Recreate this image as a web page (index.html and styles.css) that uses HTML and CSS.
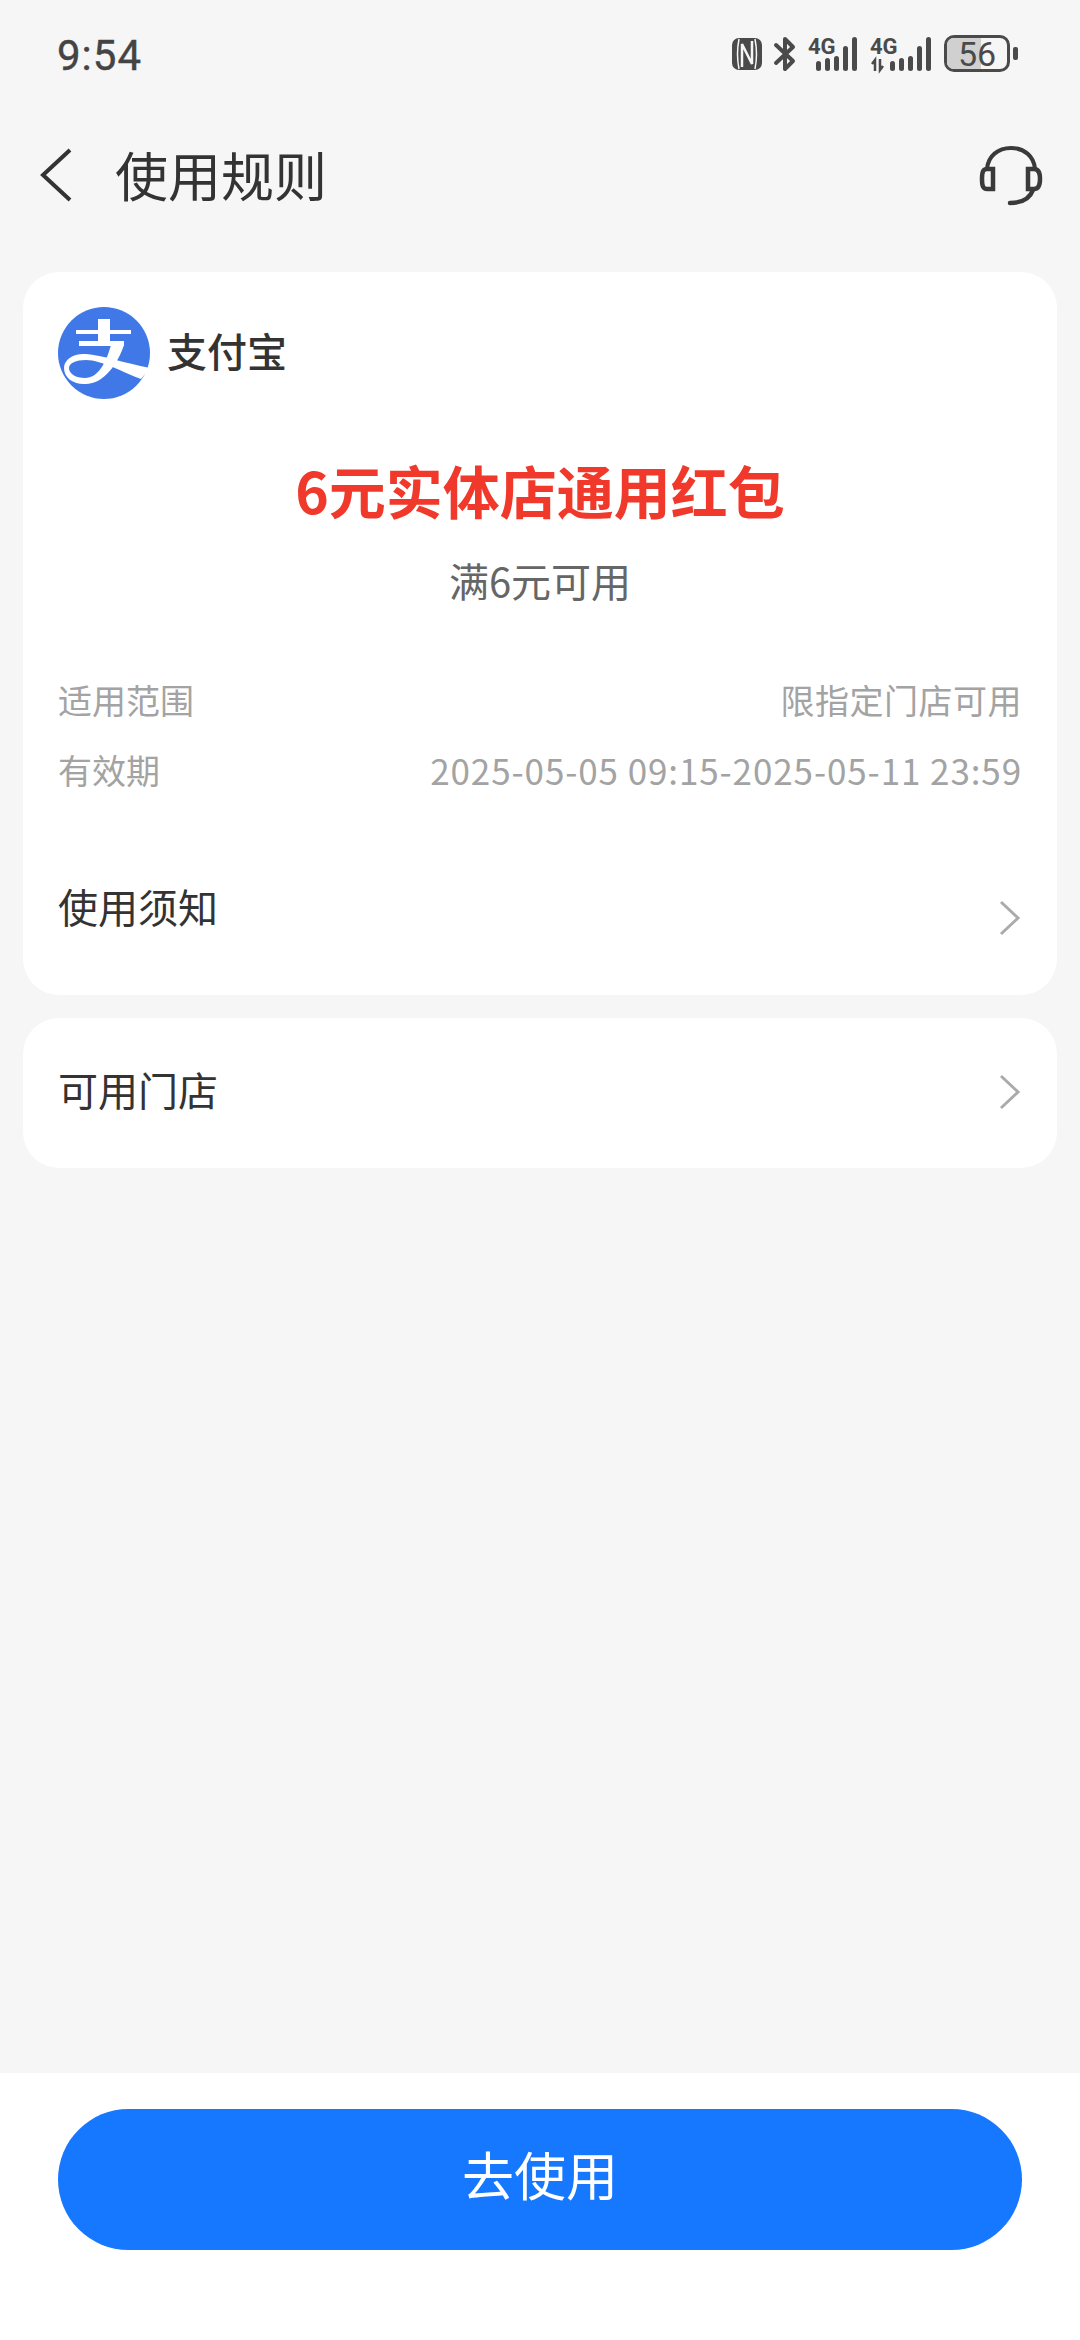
FILE: index.html
```html
<!DOCTYPE html>
<html lang="zh-CN">
<head>
  <meta charset="UTF-8" />
  <title>使用规则</title>
  <link rel="stylesheet" href="styles.css">
</head>
<body>
  <div class="page">
    <div class="status-bar">
      <span class="time">9:54</span>
      <div class="status-icons">
        <!-- NFC -->
        <svg class="nfc" width="30" height="32" viewBox="0 0 30 32">
          <rect x="0" y="0" width="30" height="32" rx="7"/>
          <path d="M7 1Q4 16 7 31M23 1Q26 16 23 31" fill="none" stroke="#f6f6f6" stroke-width="1.500"/>
          <path d="M10 29V6L20 26V3" fill="none" stroke="#f6f6f6" stroke-width="2.500"/>
        </svg>
        <!-- bluetooth -->
        <svg class="bt" width="22" height="36" viewBox="0 0 22 36">
          <path d="M2 9L19 25L11 33V3L19 11L2 27" fill="none" stroke="#4a4a4a" stroke-width="4" stroke-linejoin="round" stroke-linecap="round"/>
        </svg>
        <!-- sim 1 -->
        <svg class="sim1" width="50" height="36" viewBox="0 0 50 36">
          <text x="0" y="18" class="net">4G</text>
          <rect x="8" y="25" width="5" height="10" rx="2.500"/>
          <rect x="17" y="22" width="5" height="13" rx="2.500"/>
          <rect x="26" y="20" width="5" height="15" rx="2.500"/>
          <rect x="35" y="10" width="5" height="25" rx="2.500"/>
          <rect x="44" y="1" width="5" height="34" rx="2.500"/>
        </svg>
        <!-- sim 2 -->
        <svg class="sim2" width="62" height="36" viewBox="0 0 62 36">
          <text x="0" y="18" class="net">4G</text>
          <path d="M5 35V24L2 28M10 23V34L13 30" fill="none" stroke="#4a4a4a" stroke-width="2.500"/>
          <rect x="20" y="25" width="5" height="10" rx="2.500"/>
          <rect x="29" y="22" width="5" height="13" rx="2.500"/>
          <rect x="38" y="20" width="5" height="15" rx="2.500"/>
          <rect x="47" y="10" width="5" height="25" rx="2.500"/>
          <rect x="56" y="1" width="5" height="34" rx="2.500"/>
        </svg>
        <!-- battery -->
        <div class="battery">
          <div class="battery-body">
            <div class="battery-fill"></div>
            <span class="battery-num">56</span>
          </div>
          <div class="battery-tip"></div>
        </div>
      </div>
    </div>

    <div class="nav">
      <svg class="back" width="34" height="54" viewBox="0 0 34 54">
        <path d="M32 2L5 27L32 52" fill="none" stroke="#333" stroke-width="4"/>
      </svg>
      <h1 class="title">使用规则</h1>
      <svg class="headset" width="66" height="62" viewBox="0 0 66 62">
        <path d="M9 24C10 11 20 3 33 3S56 11 57 24" fill="none" stroke="#3a3a3a" stroke-width="4"/>
        <path d="M15 24H9C5 24 4 27 4 34S5 44 9 44H15Z" fill="none" stroke="#3a3a3a" stroke-width="4.500"/>
        <path d="M50 24H56C60 24 62 27 62 34S60 44 56 44H50Z" fill="none" stroke="#3a3a3a" stroke-width="4.500"/>
        <path d="M55 45C52 53 44 58 32 58" fill="none" stroke="#3a3a3a" stroke-width="4.500" stroke-linecap="round"/>
      </svg>
    </div>

    <div class="card card-main">
      <div class="brand">
        <svg class="logo" width="92" height="92" viewBox="0 0 92 92">
          <circle cx="46" cy="46" r="46" fill="#4178e8"/>
          <path d="M18 23H73V27H18ZM40 12H52V34H66V39H21V34H40Z" fill="#fff"/>
          <path d="M6 61C6 52 16 46 28 47C44 48 66 56 92 61L83 72C66 66 44 53 28 53C18 53 11 56 11 61Z" fill="#fff"/>
          <path d="M66 38C60 56 46 78 26 77C14 77 6 70 6 61L11 61C11 67 18 71 27 71C40 71 48 56 53 38Z" fill="#fff"/>
        </svg>
        <span class="brand-name">支付宝</span>
      </div>

      <div class="coupon-name">6元实体店通用红包</div>
      <div class="coupon-cond">满6元可用</div>

      <div class="info-row info-first">
        <span>适用范围</span>
        <span class="scope">限指定门店可用</span>
      </div>
      <div class="info-row">
        <span>有效期</span>
        <span class="date-range">2025-05-05 09:15-2025-05-11 23:59</span>
      </div>

      <div class="link-row link-notice">
        <span>使用须知</span>
        <svg class="chevron" width="22" height="36" viewBox="0 0 22 36">
          <path d="M2 2L19 18L2 34" fill="none" stroke="#ababab" stroke-width="3"/>
        </svg>
      </div>
    </div>

    <div class="card card-store">
      <div class="link-row">
        <span>可用门店</span>
        <svg class="chevron" width="22" height="36" viewBox="0 0 22 36">
          <path d="M2 2L19 18L2 34" fill="none" stroke="#ababab" stroke-width="3"/>
        </svg>
      </div>
    </div>

    <div class="footer">
      <button class="use-btn" type="button">去使用</button>
    </div>
  </div>
</body>
</html>
```

FILE: styles.css
```css
* {
  box-sizing: border-box;
}

body {
  margin: 0;
  padding: 0;
  background: #f6f6f6;
  font-family: "Noto Sans CJK SC", "Noto Sans", sans-serif;
}

.page {
  width: 1080px;
  height: 2340px;
  display: flex;
  flex-direction: column;
}

.status-bar {
  height: 110px;
  padding: 32px 62px 0 57px;
  display: flex;
  justify-content: space-between;
  align-items: flex-start;
}

.time {
  font-family: "Roboto", sans-serif;
  font-size: 42px;
  line-height: 48px;
  color: #444;
  letter-spacing: 1px;
  -webkit-text-stroke: 0.4px #444;
}

.status-icons {
  display: flex;
  align-items: center;
  gap: 12px;
  padding-top: 3px;
}

.status-icons svg {
  overflow: visible;
}

.status-icons svg rect {
  fill: #4a4a4a;
}

.net {
  font-family: "Roboto", sans-serif;
  font-size: 22px;
  font-weight: 700;
  fill: #4a4a4a;
}

.battery {
  display: flex;
  align-items: center;
  gap: 3px;
}

.battery-body {
  position: relative;
  width: 66px;
  height: 37px;
  border: 3px solid #4a4a4a;
  border-radius: 10px;
  overflow: hidden;
  display: flex;
  align-items: center;
  justify-content: center;
}

.battery-fill {
  position: absolute;
  left: 0;
  top: 0;
  bottom: 0;
  width: 56%;
  background: #d0d0d0;
}

.battery-num {
  position: relative;
  font-family: "Roboto", sans-serif;
  font-size: 34px;
  line-height: 30px;
  color: #4a4a4a;
}

.battery-tip {
  width: 5px;
  height: 13px;
  border-radius: 2px;
  background: #4a4a4a;
}

.nav {
  height: 110px;
  padding: 18px 36px 0 38px;
  display: flex;
  align-items: center;
}

.back {
  margin-top: 2px;
}

.title {
  flex: 1;
  margin: 0 0 0 43px;
  font-size: 53px;
  font-weight: 400;
  line-height: 70px;
  color: #333;
}

.headset {
  margin-top: 4px;
}

.card {
  margin: 0 23px;
  background: #fff;
  border-radius: 36px;
}

.card-main {
  margin-top: 52px;
  height: 723px;
  padding: 35px 35px 0;
}

.card-store {
  margin-top: 23px;
  height: 150px;
  padding: 0 35px 8px;
  display: flex;
  flex-direction: column;
  justify-content: center;
}

.brand {
  display: flex;
  align-items: center;
  gap: 17px;
}

.brand-name {
  font-size: 40px;
  font-weight: 500;
  color: #333;
  margin-bottom: 6px;
}

.coupon-name {
  margin-top: 48px;
  text-align: center;
  font-size: 57px;
  font-weight: 700;
  line-height: 84px;
  color: #f0392b;
}

.coupon-cond {
  margin-top: 21px;
  text-align: center;
  font-size: 40px;
  line-height: 56px;
  color: #666;
}

.info-row {
  display: flex;
  justify-content: space-between;
  font-size: 34px;
  line-height: 48px;
  color: #a3a3a3;
  margin-top: 22px;
}

.info-first {
  margin-top: 68px;
}

.scope {
  letter-spacing: 0.5px;
}

.date-range {
  font-size: 35px;
  letter-spacing: 0.9px;
}

.link-row {
  display: flex;
  justify-content: space-between;
  align-items: center;
  font-size: 40px;
  line-height: 56px;
  color: #333;
}

.link-notice {
  margin-top: 82px;
}

.chevron {
  margin-top: 6px;
  margin-right: 1px;
}

.link-notice .chevron {
  margin-top: 24px;
}

.footer {
  margin-top: auto;
  height: 267px;
  background: #fff;
  padding: 36px 58px 0;
}

.use-btn {
  display: block;
  width: 100%;
  height: 141px;
  padding: 0 0 12px;
  border: none;
  border-radius: 71px;
  background: #1677ff;
  color: #fff;
  font-family: inherit;
  font-size: 52px;
}
```
